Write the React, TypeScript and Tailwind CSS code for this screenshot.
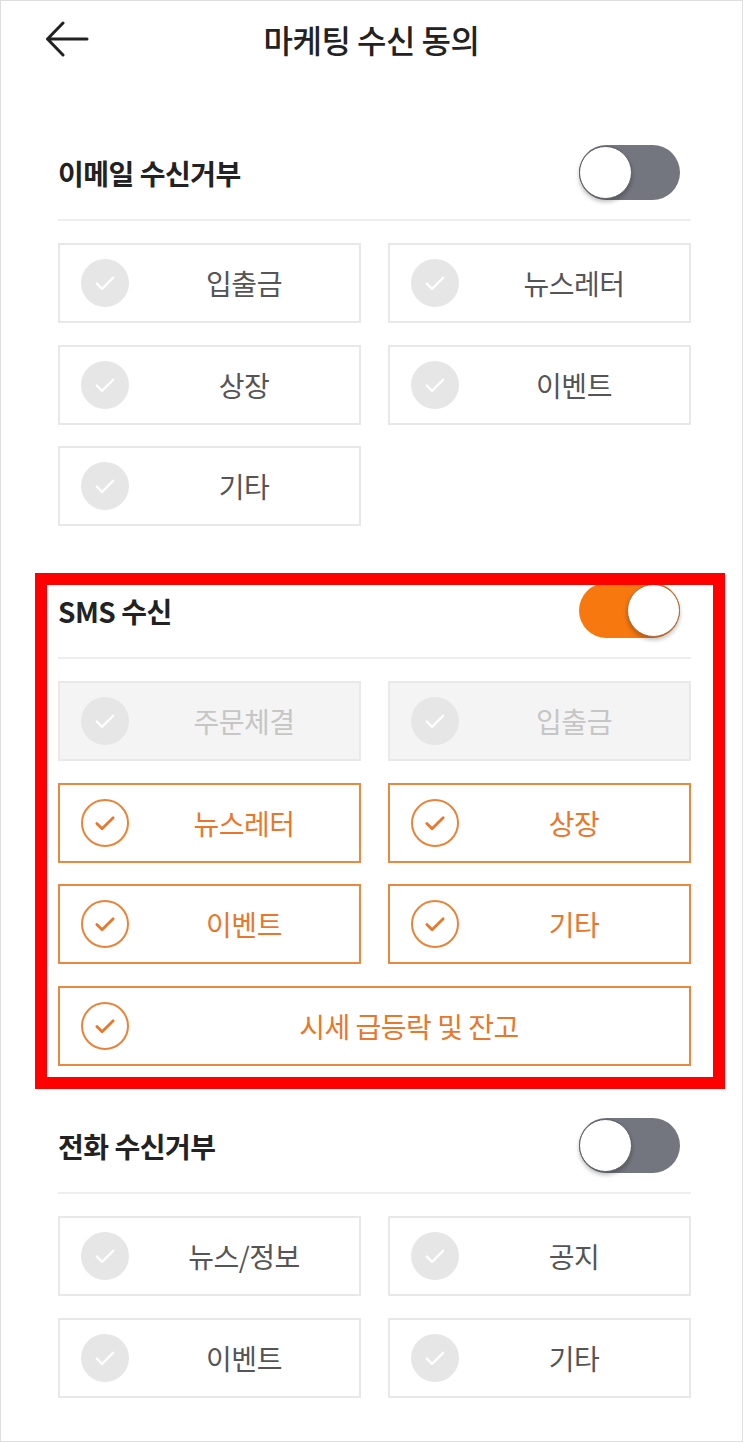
import React from 'react';

type ItemState = 'off' | 'disabled' | 'on';

interface Item {
  label: string;
  state: ItemState;
  full?: boolean;
}

const FONT = { fontFamily: '"Noto Sans CJK KR", "Noto Sans", sans-serif' };

const CheckMark: React.FC<{ state: ItemState }> = ({ state }) => {
  if (state === 'on') {
    return (
      <div className="flex h-[48px] w-[48px] flex-shrink-0 items-center justify-center rounded-full border-2 border-[#e8843a]">
        <svg viewBox="0 0 24 24" className="h-[28px] w-[28px]" fill="none" stroke="#e8782c" strokeWidth={2.4} strokeLinecap="round" strokeLinejoin="round">
          <path d="M5 12.5l4.5 4.5L19 7.5" />
        </svg>
      </div>
    );
  }
  return (
    <div className="flex h-[48px] w-[48px] flex-shrink-0 items-center justify-center rounded-full bg-[#e6e6e6]">
      <svg viewBox="0 0 24 24" className="h-[28px] w-[28px]" fill="none" stroke="#ffffff" strokeWidth={2} strokeLinecap="round" strokeLinejoin="round">
        <path d="M5 12.5l4.5 4.5L19 7.5" />
      </svg>
    </div>
  );
};

const OptionBox: React.FC<{ item: Item }> = ({ item }) => {
  const box =
    item.state === 'on'
      ? 'border-[#e8893f] bg-white text-[#e8772c]'
      : item.state === 'disabled'
        ? 'border-[#e9e9e9] bg-[#f4f4f4] text-[#c6c6c6]'
        : 'border-[#e8e8e8] bg-white text-[#555555]';

  return (
    <div className={`flex h-[80px] items-center border-2 pl-[21px] ${box} ${item.full ? 'col-span-2' : ''}`}>
      <CheckMark state={item.state} />
      <span className="flex-1 text-center text-[28px] leading-none tracking-[-0.5px]">{item.label}</span>
    </div>
  );
};

const Toggle: React.FC<{ on: boolean }> = ({ on }) => (
  <div
    className={`flex h-[55px] w-[101px] items-center rounded-full ${
      on ? 'justify-end bg-[#f7780f]' : 'justify-start bg-[#73767e]'
    }`}
  >
    <div
      className={`h-[53px] w-[53px] rounded-full border bg-white shadow-[0_3px_4px_rgba(0,0,0,0.25)] ${
        on ? 'border-[#a8693a]' : 'border-[#5a5c62]'
      }`}
    />
  </div>
);

const Section: React.FC<{ title: string; on: boolean; items: Item[]; highlight?: boolean }> = ({
  title,
  on,
  items,
  highlight,
}) => (
  <section className="relative">
    <div className="flex h-[55px] items-center justify-between">
      <h2 className="text-[28px] font-bold tracking-[-0.5px] text-[#222222]">{title}</h2>
      <div className="mr-[11px]">
        <Toggle on={on} />
      </div>
    </div>
    <div className="mt-[19px] h-[2px] bg-[#eeeeee]" />
    <div className="mt-[22px] grid grid-cols-2 gap-x-[27px] gap-y-[21.5px]">
      {items.map((item) => (
        <OptionBox key={item.label} item={item} />
      ))}
    </div>
    {highlight && (
      <div className="pointer-events-none absolute top-[-10px] left-[-23px] right-[-34px] bottom-[-23px] border-[12px] border-[#ff0000]" />
    )}
  </section>
);

export default function App() {
  return (
    <div className="h-[1442px] w-[743px] overflow-hidden border border-[#dedede] bg-white" style={FONT}>
      <header className="relative flex h-[76px] items-center">
        <svg viewBox="0 0 44 36" className="ml-[44px] h-[36px] w-[44px]" fill="none" stroke="#222222" strokeWidth={3} strokeLinecap="round" strokeLinejoin="round">
          <path d="M42 18H3M18 2L2.5 18 18 34" />
        </svg>
        <h1 className="absolute left-0 right-0 text-center text-[32px] font-medium tracking-[-0.5px] text-[#222222]">
          마케팅 수신 동의
        </h1>
      </header>

      <div className="ml-[57px] w-[633px] pt-[68px]">
        <Section
          title="이메일 수신거부"
          on={false}
          items={[
            { label: '입출금', state: 'off' },
            { label: '뉴스레터', state: 'off' },
            { label: '상장', state: 'off' },
            { label: '이벤트', state: 'off' },
            { label: '기타', state: 'off' },
          ]}
        />
        <div className="h-[57px]" />
        <Section
          title="SMS 수신"
          on
          highlight
          items={[
            { label: '주문체결', state: 'disabled' },
            { label: '입출금', state: 'disabled' },
            { label: '뉴스레터', state: 'on' },
            { label: '상장', state: 'on' },
            { label: '이벤트', state: 'on' },
            { label: '기타', state: 'on' },
            { label: '시세 급등락 및 잔고', state: 'on', full: true },
          ]}
        />
        <div className="h-[52.5px]" />
        <Section
          title="전화 수신거부"
          on={false}
          items={[
            { label: '뉴스/정보', state: 'off' },
            { label: '공지', state: 'off' },
            { label: '이벤트', state: 'off' },
            { label: '기타', state: 'off' },
          ]}
        />
      </div>
    </div>
  );
}
